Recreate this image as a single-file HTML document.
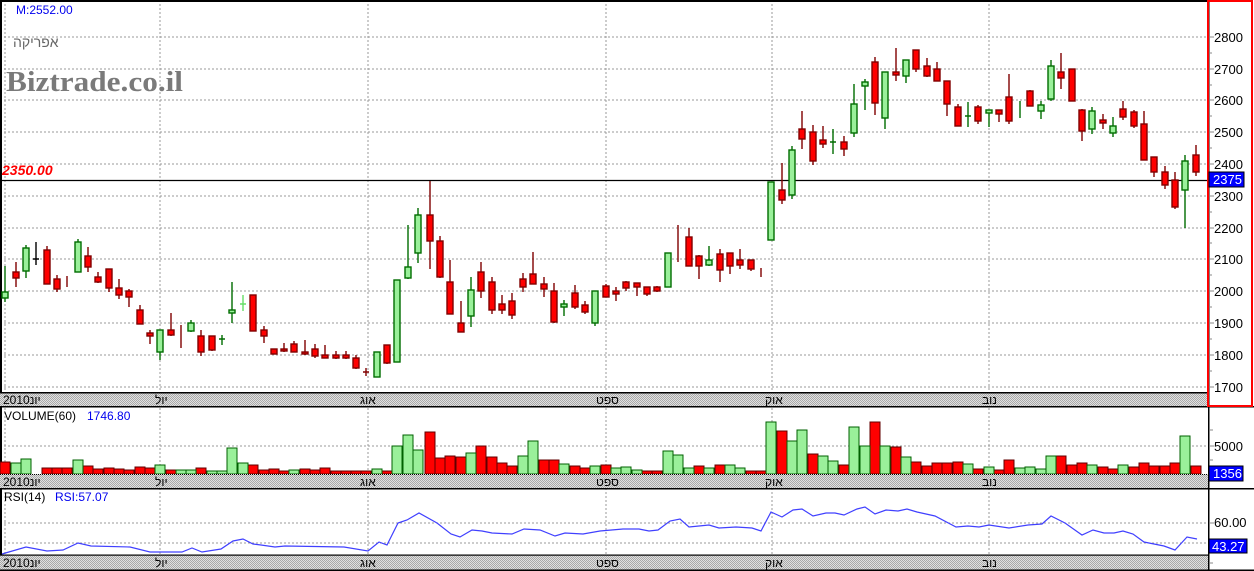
<!DOCTYPE html>
<html><head><meta charset="utf-8"><style>
html,body{margin:0;padding:0;background:#fff;}
svg{display:block;font-family:"Liberation Sans","Noto Sans CJK JP",sans-serif;}
.gr line{stroke:#999;stroke-width:1;stroke-dasharray:2 2}
.R rect{fill:#ff0000;stroke:#800000;stroke-width:1.4}
.R path{stroke:#800000;stroke-width:1.4;fill:none}
.G rect{fill:#9af09a;stroke:#006c00;stroke-width:1.4}
.G path{stroke:#006c00;stroke-width:1.4;fill:none}
.VR rect{fill:#ff0000;stroke:#600000;stroke-width:1}
.VG rect{fill:#9af09a;stroke:#006000;stroke-width:1}
.ax text{font-size:13px;fill:#000}
.db text{font-size:12px;fill:#000}
</style></head><body>
<svg width="1254" height="571" viewBox="0 0 1254 571" xmlns="http://www.w3.org/2000/svg">
<rect width="1254" height="571" fill="#fff"/>
<defs><pattern id="dith" width="2" height="2" patternUnits="userSpaceOnUse"><rect width="2" height="2" fill="#e0e0e0"/><rect width="1" height="1" fill="#a8a8a8"/><rect x="1" y="1" width="1" height="1" fill="#a8a8a8"/></pattern></defs>
<!-- main grid -->
<g class="gr">
<line x1="0" x2="1208" y1="37" y2="37"/><line x1="0" x2="1208" y1="69" y2="69"/><line x1="0" x2="1208" y1="100" y2="100"/><line x1="0" x2="1208" y1="132" y2="132"/><line x1="0" x2="1208" y1="164" y2="164"/><line x1="0" x2="1208" y1="196" y2="196"/><line x1="0" x2="1208" y1="228" y2="228"/><line x1="0" x2="1208" y1="259" y2="259"/><line x1="0" x2="1208" y1="291" y2="291"/><line x1="0" x2="1208" y1="323" y2="323"/><line x1="0" x2="1208" y1="355" y2="355"/><line x1="0" x2="1208" y1="387" y2="387"/>
<line x1="5" x2="5" y1="0" y2="571"/><line x1="160" x2="160" y1="0" y2="571"/><line x1="368" x2="368" y1="0" y2="571"/><line x1="606" x2="606" y1="0" y2="571"/><line x1="772" x2="772" y1="0" y2="571"/><line x1="989" x2="989" y1="0" y2="571"/>
<line x1="0" x2="1208" y1="446" y2="446"/><line x1="0" x2="1208" y1="523" y2="523"/><line x1="0" x2="1208" y1="543" y2="543"/>
</g>
<!-- borders -->
<rect x="0" y="0" width="1208" height="2" fill="#000"/>
<rect x="0" y="0" width="2" height="571" fill="#000"/>
<!-- watermark texts -->
<text x="16" y="14" font-size="12" fill="#0000ee">M:2552.00</text>
<text x="13" y="47" font-size="14" fill="#666" font-family="Liberation Sans,sans-serif">אפריקה</text>
<text x="6" y="91" font-size="29" font-weight="bold" fill="#7a7a7a" font-family="Liberation Serif,serif" textLength="177" lengthAdjust="spacingAndGlyphs">Biztrade.co.il</text>
<text x="2" y="175" font-size="14" font-weight="bold" font-style="italic" fill="#ff0000">2350.00</text>
<line x1="0" x2="1208" y1="180.5" y2="180.5" stroke="#000" stroke-width="1.3"/>
<!-- candles red -->
<g class="R">
<path d="M16 262V287M47 246V284M57 275V292M67 276V287M88 247V272M98 272V283M109 269V292M119 279V299M129 289V307M140 305V324M150 330V344M171 313V336M181 325V348M201 330V356M212 336V351M253 295V331M264 326V343M274 349V354M284 343V352M294 341V352M305 340V355M315 344V358M325 345V358M336 351V359M346 351V359M356 355V369M366 368V376M363 372H369M387 345V364M430 181V269M440 236V278M450 260V314M461 301V332M481 262V298M492 277V314M502 295V314M512 293V319M523 273V292M533 252V284M544 277V297M554 283V323M575 285V309M585 301V314M606 284V297M616 287V301M626 281V291M637 283V296M647 287V296M657 286V292M678 225V262M689 228V266M699 255V279M720 249V282M730 253V274M740 249V269M751 260V271M761 268V277M782 163V204M802 111V149M813 125V165M823 126V148M844 136V156M875 57V115M896 48V81M916 50V72M927 58V77M937 62V81M947 81V116M958 104V126M978 105V124M999 110V122M1009 74V124M1030 90V106M1061 53V89M1072 69V101M1082 109V141M1103 114V129M1123 101V120M1134 110V128M1144 111V160M1154 157V177M1165 166V189M1175 172V209M1196 145V176"/>
<rect x="13" y="272" width="6" height="6"/><rect x="44" y="250" width="6" height="34"/><rect x="54" y="279" width="6" height="10"/><rect x="85" y="256" width="6" height="11"/><rect x="95" y="277" width="6" height="5"/><rect x="106" y="269" width="6" height="19"/><rect x="116" y="288" width="6" height="7"/><rect x="126" y="291" width="6" height="6"/><rect x="137" y="310" width="6" height="14"/><rect x="147" y="333" width="6" height="3"/><rect x="168" y="330" width="6" height="5"/><rect x="198" y="336" width="6" height="16"/><rect x="209" y="336" width="6" height="14"/><rect x="250" y="295" width="6" height="36"/><rect x="261" y="330" width="6" height="6"/><rect x="271" y="349" width="6" height="5"/><rect x="281" y="349" width="6" height="2"/><rect x="291" y="344" width="6" height="8"/><rect x="302" y="352" width="6" height="2"/><rect x="312" y="349" width="6" height="7"/><rect x="322" y="355" width="6" height="3"/><rect x="333" y="355" width="6" height="3"/><rect x="343" y="355" width="6" height="3"/><rect x="353" y="358" width="6" height="10"/><rect x="384" y="345" width="6" height="18"/><rect x="427" y="215" width="6" height="26"/><rect x="437" y="241" width="6" height="36"/><rect x="447" y="282" width="6" height="32"/><rect x="458" y="323" width="6" height="9"/><rect x="478" y="272" width="6" height="19"/><rect x="489" y="282" width="6" height="28"/><rect x="499" y="304" width="6" height="6"/><rect x="509" y="301" width="6" height="14"/><rect x="520" y="279" width="6" height="8"/><rect x="530" y="274" width="6" height="10"/><rect x="541" y="284" width="6" height="5"/><rect x="551" y="291" width="6" height="31"/><rect x="572" y="293" width="6" height="14"/><rect x="582" y="305" width="6" height="7"/><rect x="603" y="286" width="6" height="11"/><rect x="613" y="291" width="6" height="3"/><rect x="623" y="282" width="6" height="6"/><rect x="634" y="283" width="6" height="4"/><rect x="644" y="287" width="6" height="7"/><rect x="654" y="287" width="6" height="4"/><rect x="686" y="237" width="6" height="29"/><rect x="696" y="256" width="6" height="10"/><rect x="717" y="254" width="6" height="16"/><rect x="727" y="253" width="6" height="13"/><rect x="737" y="260" width="6" height="5"/><rect x="748" y="260" width="6" height="9"/><rect x="779" y="190" width="6" height="10"/><rect x="799" y="129" width="6" height="10"/><rect x="810" y="132" width="6" height="29"/><rect x="820" y="140" width="6" height="4"/><rect x="841" y="142" width="6" height="7"/><rect x="872" y="62" width="6" height="41"/><rect x="893" y="72" width="6" height="3"/><rect x="913" y="50" width="6" height="19"/><rect x="924" y="66" width="6" height="10"/><rect x="934" y="69" width="6" height="12"/><rect x="944" y="81" width="6" height="23"/><rect x="955" y="107" width="6" height="19"/><rect x="975" y="107" width="6" height="14"/><rect x="996" y="110" width="6" height="4"/><rect x="1006" y="97" width="6" height="24"/><rect x="1027" y="91" width="6" height="15"/><rect x="1058" y="72" width="6" height="6"/><rect x="1069" y="69" width="6" height="32"/><rect x="1079" y="110" width="6" height="21"/><rect x="1100" y="120" width="6" height="3"/><rect x="1120" y="109" width="6" height="8"/><rect x="1131" y="112" width="6" height="14"/><rect x="1141" y="124" width="6" height="36"/><rect x="1151" y="157" width="6" height="15"/><rect x="1162" y="172" width="6" height="13"/><rect x="1172" y="180" width="6" height="27"/><rect x="1193" y="155" width="6" height="17"/>
</g>
<!-- candles green -->
<g class="G">
<path d="M5 266V302M26 245V278M78 239V272M160 330V360M191 320V332M222 335V345M219 339H225M232 282V323M377 352V377M397 280V362M408 225V279M418 208V263M471 277V327M564 300V316M595 291V326M668 253V287M709 246V266M771 182V240M792 146V199M833 129V154M830 142H836M854 84V137M865 79V110M885 72V129M906 60V83M968 102V127M965 116H971M989 110V127M1020 101V118M1041 101V119M1051 60V101M1092 107V134M1113 117V137M1185 155V228"/>
<rect x="2" y="292" width="6" height="6"/><rect x="23" y="248" width="6" height="23"/><rect x="75" y="242" width="6" height="30"/><rect x="157" y="330" width="6" height="22"/><rect x="188" y="323" width="6" height="8"/><rect x="229" y="310" width="6" height="3"/><rect x="374" y="352" width="6" height="25"/><rect x="394" y="280" width="6" height="82"/><rect x="405" y="267" width="6" height="11"/><rect x="415" y="215" width="6" height="38"/><rect x="468" y="290" width="6" height="26"/><rect x="561" y="304" width="6" height="3"/><rect x="592" y="291" width="6" height="32"/><rect x="665" y="253" width="6" height="34"/><rect x="706" y="260" width="6" height="5"/><rect x="768" y="182" width="6" height="58"/><rect x="789" y="150" width="6" height="45"/><rect x="851" y="104" width="6" height="29"/><rect x="862" y="82" width="6" height="4"/><rect x="882" y="72" width="6" height="46"/><rect x="903" y="60" width="6" height="16"/><rect x="986" y="110" width="6" height="3"/><rect x="1038" y="105" width="6" height="6"/><rect x="1048" y="66" width="6" height="33"/><rect x="1089" y="111" width="6" height="18"/><rect x="1110" y="126" width="6" height="7"/><rect x="1182" y="161" width="6" height="29"/>
</g>
<path d="M36 242V265M33 259H39" stroke="#000" stroke-width="1.4"/>
<path d="M243 295V311M240 304H246" stroke="#66dd66" stroke-width="1.4"/>
<!-- date band main -->
<rect x="0" y="393" width="1208" height="14" fill="url(#dith)"/>
<rect x="0" y="392" width="1208" height="1.5" fill="#000"/>
<rect x="0" y="406" width="1254" height="1.5" fill="#000"/>
<g class="db">
<text x="3" y="404">2010יונ</text><text x="155" y="404">יול</text><text x="360" y="404">אוג</text><text x="596" y="404">ספט</text><text x="765" y="404">אוק</text><text x="982" y="404">נוב</text>
</g>
<!-- volume -->
<text x="4" y="420" font-size="12" fill="#000">VOLUME(60)</text>
<text x="87" y="420" font-size="12" fill="#0000ee">1746.80</text>
<g class="VR">
<rect x="0" y="462" width="10" height="12"/><rect x="42" y="468" width="10" height="6"/><rect x="52" y="468" width="10" height="6"/><rect x="62" y="468" width="10" height="6"/><rect x="83" y="466" width="10" height="8"/><rect x="93" y="469" width="10" height="5"/><rect x="104" y="468" width="10" height="6"/><rect x="114" y="469" width="10" height="5"/><rect x="124" y="470" width="10" height="4"/><rect x="135" y="467" width="10" height="7"/><rect x="145" y="468" width="10" height="6"/><rect x="166" y="470" width="10" height="4"/><rect x="196" y="468" width="10" height="6"/><rect x="248" y="465" width="10" height="9"/><rect x="259" y="470" width="10" height="4"/><rect x="269" y="469" width="10" height="5"/><rect x="279" y="471" width="10" height="3"/><rect x="300" y="469" width="10" height="5"/><rect x="310" y="470" width="10" height="4"/><rect x="320" y="468" width="10" height="6"/><rect x="331" y="471" width="10" height="3"/><rect x="341" y="471" width="10" height="3"/><rect x="351" y="471" width="10" height="3"/><rect x="361" y="471" width="10" height="3"/><rect x="382" y="471" width="10" height="3"/><rect x="425" y="432" width="10" height="42"/><rect x="435" y="458" width="10" height="16"/><rect x="445" y="456" width="10" height="18"/><rect x="456" y="457" width="10" height="17"/><rect x="476" y="446" width="10" height="28"/><rect x="487" y="457" width="10" height="17"/><rect x="497" y="463" width="10" height="11"/><rect x="507" y="466" width="10" height="8"/><rect x="539" y="460" width="10" height="14"/><rect x="549" y="460" width="10" height="14"/><rect x="570" y="466" width="10" height="8"/><rect x="580" y="468" width="10" height="6"/><rect x="601" y="465" width="10" height="9"/><rect x="642" y="471" width="10" height="3"/><rect x="652" y="471" width="10" height="3"/><rect x="694" y="466" width="10" height="8"/><rect x="715" y="465" width="10" height="9"/><rect x="746" y="471" width="10" height="3"/><rect x="756" y="471" width="10" height="3"/><rect x="777" y="431" width="10" height="43"/><rect x="808" y="454" width="10" height="20"/><rect x="839" y="465" width="10" height="9"/><rect x="870" y="422" width="10" height="52"/><rect x="891" y="447" width="10" height="27"/><rect x="911" y="462" width="10" height="12"/><rect x="922" y="466" width="10" height="8"/><rect x="932" y="463" width="10" height="11"/><rect x="942" y="463" width="10" height="11"/><rect x="953" y="462" width="10" height="12"/><rect x="973" y="469" width="10" height="5"/><rect x="994" y="470" width="10" height="4"/><rect x="1004" y="460" width="10" height="14"/><rect x="1056" y="456" width="10" height="18"/><rect x="1067" y="465" width="10" height="9"/><rect x="1077" y="463" width="10" height="11"/><rect x="1098" y="467" width="10" height="7"/><rect x="1108" y="469" width="10" height="5"/><rect x="1129" y="467" width="10" height="7"/><rect x="1139" y="463" width="10" height="11"/><rect x="1149" y="466" width="10" height="8"/><rect x="1160" y="466" width="10" height="8"/><rect x="1170" y="463" width="10" height="11"/><rect x="1191" y="466" width="10" height="8"/>
</g>
<g class="VG">
<rect x="11" y="463" width="10" height="11"/><rect x="21" y="459" width="10" height="15"/><rect x="73" y="460" width="10" height="14"/><rect x="155" y="465" width="10" height="9"/><rect x="176" y="470" width="10" height="4"/><rect x="186" y="470" width="10" height="4"/><rect x="207" y="471" width="10" height="3"/><rect x="217" y="471" width="10" height="3"/><rect x="227" y="448" width="10" height="26"/><rect x="238" y="463" width="10" height="11"/><rect x="289" y="470" width="10" height="4"/><rect x="372" y="469" width="10" height="5"/><rect x="392" y="446" width="10" height="28"/><rect x="403" y="435" width="10" height="39"/><rect x="413" y="450" width="10" height="24"/><rect x="466" y="453" width="10" height="21"/><rect x="518" y="456" width="10" height="18"/><rect x="528" y="441" width="10" height="33"/><rect x="559" y="464" width="10" height="10"/><rect x="590" y="466" width="10" height="8"/><rect x="611" y="468" width="10" height="6"/><rect x="621" y="467" width="10" height="7"/><rect x="632" y="470" width="10" height="4"/><rect x="663" y="451" width="10" height="23"/><rect x="673" y="455" width="10" height="19"/><rect x="684" y="468" width="10" height="6"/><rect x="704" y="468" width="10" height="6"/><rect x="725" y="465" width="10" height="9"/><rect x="735" y="468" width="10" height="6"/><rect x="766" y="422" width="10" height="52"/><rect x="787" y="441" width="10" height="33"/><rect x="797" y="430" width="10" height="44"/><rect x="818" y="456" width="10" height="18"/><rect x="828" y="461" width="10" height="13"/><rect x="849" y="427" width="10" height="47"/><rect x="860" y="446" width="10" height="28"/><rect x="880" y="446" width="10" height="28"/><rect x="901" y="457" width="10" height="17"/><rect x="963" y="464" width="10" height="10"/><rect x="984" y="467" width="10" height="7"/><rect x="1015" y="468" width="10" height="6"/><rect x="1025" y="467" width="10" height="7"/><rect x="1036" y="469" width="10" height="5"/><rect x="1046" y="456" width="10" height="18"/><rect x="1087" y="465" width="10" height="9"/><rect x="1118" y="465" width="10" height="9"/><rect x="1180" y="436" width="10" height="38"/>
</g>
<rect x="0" y="474" width="1208" height="15" fill="url(#dith)"/>
<line x1="0" x2="1208" y1="474.5" y2="474.5" stroke="#000" stroke-width="1" stroke-dasharray="1 1"/>
<rect x="0" y="488" width="1254" height="1.5" fill="#000"/>
<g class="db">
<text x="3" y="486">2010יונ</text><text x="155" y="486">יול</text><text x="360" y="486">אוג</text><text x="596" y="486">ספט</text><text x="765" y="486">אוק</text><text x="982" y="486">נוב</text>
</g>
<!-- RSI -->
<text x="4" y="501" font-size="12" fill="#000">RSI(14)</text>
<text x="55" y="501" font-size="12" fill="#0000ee">RSI:57.07</text>
<polyline fill="none" stroke="#4040ff" stroke-width="1.2" points="2,554 26,547 47,551 63,550 78,543 91,546 130,547 150,552 182,552 192,548 202,552 221,549 233,541 243,539 253,544 261,545 275,547 285,546 344,547 368,551 379,542 387,545 398,523 407,520 419,513 437,523 451,534 460,537 472,530 482,531 492,533 512,534 524,529 540,530 555,536 565,533 583,534 600,531 623,529 639,529 649,531 658,530 670,521 680,519 689,527 709,525 719,528 736,527 752,528 761,531 771,512 782,517 793,510 802,509 813,516 826,513 835,513 844,515 857,509 865,507 875,514 886,510 898,511 907,509 917,512 935,516 956,527 968,526 979,527 989,525 1009,528 1028,525 1042,524 1051,516 1065,523 1082,535 1093,530 1104,533 1114,533 1123,531 1133,534 1144,542 1164,546 1175,550 1187,537 1197,539"/>
<rect x="0" y="555" width="1208" height="16" fill="url(#dith)"/>
<rect x="0" y="554.5" width="1208" height="1.2" fill="#000"/>
<rect x="0" y="569.5" width="1254" height="1.5" fill="#000"/>
<g class="db">
<text x="3" y="567">2010יונ</text><text x="155" y="567">יול</text><text x="360" y="567">אוג</text><text x="596" y="567">ספט</text><text x="765" y="567">אוק</text><text x="982" y="567">נוב</text>
</g>
<!-- right axis -->
<rect x="1208" y="0" width="1.5" height="571" fill="#000"/>
<rect x="1208" y="1" width="44" height="405" fill="none" stroke="#ff0000" stroke-width="2"/>
<g stroke="#888" stroke-width="1">
<path d="M1210 37H1214M1210 53H1212M1210 69H1214M1210 85H1212M1210 100H1214M1210 116H1212M1210 132H1214M1210 148H1212M1210 164H1214M1210 180H1212M1210 196H1214M1210 212H1212M1210 228H1214M1210 243H1212M1210 259H1214M1210 275H1212M1210 291H1214M1210 307H1212M1210 323H1214M1210 339H1212M1210 355H1214M1210 371H1212M1210 387H1214M1210 430H1213M1210 446H1214M1210 460H1213M1210 523H1214M1210 543H1214M1210 563H1213"/>
</g>
<g class="ax">
<text x="1214" y="42">2800</text><text x="1214" y="74">2700</text><text x="1214" y="105">2600</text><text x="1214" y="137">2500</text><text x="1214" y="169">2400</text><text x="1214" y="201">2300</text><text x="1214" y="233">2200</text><text x="1214" y="264">2100</text><text x="1214" y="296">2000</text><text x="1214" y="328">1900</text><text x="1214" y="360">1800</text><text x="1214" y="392">1700</text>
<text x="1214" y="451">5000</text><text x="1214" y="527">60.00</text>
</g>
<rect x="1209" y="172" width="35" height="15" fill="#0000ff" stroke="#000" stroke-width="1"/>
<text x="1213" y="184" font-size="13" fill="#fff">2375</text>
<rect x="1209" y="466" width="34" height="15" fill="#0000ff" stroke="#000" stroke-width="1"/>
<text x="1213" y="478" font-size="13" fill="#fff">1356</text>
<rect x="1209" y="539" width="38" height="14" fill="#0000ff" stroke="#000" stroke-width="1"/>
<text x="1212" y="551" font-size="13" fill="#fff">43.27</text>
</svg>
</body></html>
